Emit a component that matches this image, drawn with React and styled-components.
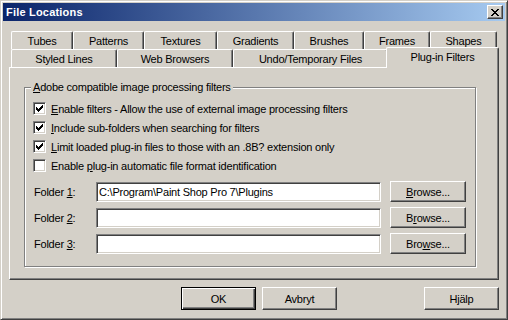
import React from "react";
import styled, { createGlobalStyle } from "styled-components";

const GlobalStyle = createGlobalStyle`
  html, body {
    margin: 0;
    padding: 0;
    background: #d4d0c8;
  }
  body {
    font-family: "Liberation Sans", Arial, sans-serif;
    font-size: 11px;
    letter-spacing: -0.22px;
    color: #000;
  }
`;

const Window = styled.div`
  width: 508px;
  height: 320px;
  box-sizing: border-box;
  background: #d4d0c8;
  border: 1px solid;
  border-color: #d4d0c8 #404040 #404040 #d4d0c8;
  box-shadow: inset 1px 1px #fff, inset -1px -1px #808080;
  padding: 2px;
  display: flex;
  flex-direction: column;
`;

const TitleBar = styled.div`
  height: 18px;
  flex: none;
  display: flex;
  align-items: center;
  justify-content: space-between;
  padding: 0 2px 0 3px;
  background: linear-gradient(to right, #0a246a, #a6caf0);
`;

const Title = styled.span`
  color: #fff;
  font-weight: bold;
  font-size: 11px;
  letter-spacing: 0.2px;
`;

const CloseButton = styled.div`
  width: 16px;
  height: 14px;
  box-sizing: border-box;
  background: #d4d0c8;
  border: 1px solid;
  border-color: #fff #404040 #404040 #fff;
  box-shadow: inset -1px -1px #808080;
  display: flex;
  align-items: center;
  justify-content: center;
`;

const Body = styled.div`
  flex: 1;
  display: flex;
  flex-direction: column;
  padding: 10px 6px 0 6px;
`;

const TabStrip = styled.div`
  padding-left: 2px;
`;

const TabRow = styled.div`
  display: flex;
  height: 18px;
`;

const Tab = styled.div`
  width: ${(p) => p.$w + (p.$active ? 4 : 0)}px;
  height: ${(p) => (p.$active ? 21 : 18)}px;
  margin: ${(p) => (p.$active ? "-2px -2px -1px -2px" : "0")};
  box-sizing: border-box;
  flex: none;
  position: relative;
  z-index: ${(p) => (p.$active ? 1 : 0)};
  background: #d4d0c8;
  border-left: 1px solid #fff;
  border-top: 1px solid #fff;
  border-right: 1px solid #404040;
  border-radius: 2px 2px 0 0;
  box-shadow: inset -1px 0 #808080;
  display: flex;
  align-items: center;
  justify-content: center;
  padding-bottom: ${(p) => (p.$active ? 3 : 0)}px;
  white-space: nowrap;
`;

const Panel = styled.div`
  height: 213px;
  box-sizing: border-box;
  border: 1px solid;
  border-color: #fff #404040 #404040 #fff;
  box-shadow: inset -1px -1px #808080;
  padding: 19px 22px 0 14px;
`;

const GroupBox = styled.div`
  position: relative;
  border: 1px solid #808080;
  box-shadow: inset 1px 1px #fff, 1px 1px #fff;
  padding: 11px 8px 12px 8px;
`;

const Legend = styled.span`
  position: absolute;
  top: -7px;
  left: 6px;
  padding: 0 2px;
  line-height: 13px;
  background: #d4d0c8;
  white-space: nowrap;
`;

const CheckRow = styled.div`
  display: flex;
  align-items: center;
  height: 19px;
  gap: 5px;
  white-space: nowrap;
`;

const CheckBox = styled.span`
  width: 13px;
  height: 13px;
  box-sizing: border-box;
  flex: none;
  background: #fff;
  border: 1px solid;
  border-color: #808080 #fff #fff #808080;
  box-shadow: inset 1px 1px #404040, inset -1px -1px #d4d0c8;
  display: flex;
  padding: 2px;
`;

const Key = styled.span`
  text-decoration: underline;
  text-underline-offset: 1px;
`;

const FolderRow = styled.div`
  display: flex;
  align-items: center;
  height: 21px;
  margin-top: ${(p) => (p.$first ? 6 : 5)}px;
`;

const FolderLabel = styled.span`
  width: 63px;
  flex: none;
  box-sizing: border-box;
  padding-left: 1px;
`;

const TextField = styled.input`
  width: 285px;
  height: 20px;
  flex: none;
  box-sizing: border-box;
  margin: 0;
  padding: 0 0 0 2px;
  background: #fff;
  border: 1px solid;
  border-color: #808080 #fff #fff #808080;
  box-shadow: inset 1px 1px #404040, inset -1px -1px #d4d0c8;
  font: inherit;
  letter-spacing: inherit;
  color: #000;
  outline: none;
`;

const Button = styled.button`
  width: ${(p) => p.$w || 75}px;
  height: ${(p) => p.$h || 23}px;
  flex: none;
  box-sizing: border-box;
  margin: 0;
  margin-left: ${(p) => p.$ml || "0"};
  padding: 0;
  background: #d4d0c8;
  font: inherit;
  letter-spacing: inherit;
  color: #000;
  border: 1px solid;
  border-color: ${(p) => (p.$default ? "#000" : "#fff #404040 #404040 #fff")};
  box-shadow: ${(p) =>
    p.$default
      ? "inset 1px 1px #fff, inset -1px -1px #404040, inset -2px -2px #808080"
      : "inset -1px -1px #808080"};
`;

const ButtonRow = styled.div`
  display: flex;
  margin-top: 7px;
  padding-left: 172px;
`;

const CloseGlyph = () => (
  <svg width="8" height="7" viewBox="0 0 8 7" shapeRendering="crispEdges">
    <path
      fill="#000"
      d="M0 0h2v1h-2z M6 0h2v1h-2z M1 1h2v1h-2z M5 1h2v1h-2z M2 2h4v1h-4z M3 3h2v1h-2z M2 4h4v1h-4z M1 5h2v1h-2z M5 5h2v1h-2z M0 6h2v1h-2z M6 6h2v1h-2z"
    />
  </svg>
);

const CheckGlyph = () => (
  <svg width="7" height="7" viewBox="0 0 7 7" shapeRendering="crispEdges">
    <path
      fill="#000"
      d="M0 2h1v3h-1z M1 3h1v3h-1z M2 4h1v3h-1z M3 3h1v3h-1z M4 2h1v3h-1z M5 1h1v3h-1z M6 0h1v3h-1z"
    />
  </svg>
);

const backTabs = [
  ["Tubes", 62],
  ["Patterns", 71],
  ["Textures", 73],
  ["Gradients", 77],
  ["Brushes", 70],
  ["Frames", 66],
  ["Shapes", 67],
];

const frontTabs = [
  ["Styled Lines", 106],
  ["Web Browsers", 116],
  ["Undo/Temporary Files", 155],
  ["Plug-in Filters", 109, true],
];

const options = [
  [true, "E", "nable filters - Allow the use of external image processing filters"],
  [true, "I", "nclude sub-folders when searching for filters"],
  [true, "L", "imit loaded plug-in files to those with an .8B? extension only"],
];

const folders = [
  ["1", "C:\\Program\\Paint Shop Pro 7\\Plugins", ["B", "rowse..."]],
  ["2", "", ["B", "r", "owse..."]],
  ["3", "", ["Bro", "w", "se..."]],
];

const renderBrowse = (parts) =>
  parts.length === 2 ? (
    <>
      <Key>{parts[0]}</Key>
      {parts[1]}
    </>
  ) : (
    <>
      {parts[0]}
      <Key>{parts[1]}</Key>
      {parts[2]}
    </>
  );

export default function App() {
  return (
    <>
      <GlobalStyle />
      <Window>
        <TitleBar>
          <Title>File Locations</Title>
          <CloseButton>
            <CloseGlyph />
          </CloseButton>
        </TitleBar>
        <Body>
          <TabStrip>
            <TabRow>
              {backTabs.map(([label, w]) => (
                <Tab key={label} $w={w}>
                  {label}
                </Tab>
              ))}
            </TabRow>
            <TabRow>
              {frontTabs.map(([label, w, active]) => (
                <Tab key={label} $w={w} $active={active}>
                  {label}
                </Tab>
              ))}
            </TabRow>
          </TabStrip>
          <Panel>
            <GroupBox>
              <Legend>
                <Key>A</Key>dobe compatible image processing filters
              </Legend>
              {options.map(([checked, key, rest]) => (
                <CheckRow key={key}>
                  <CheckBox>{checked && <CheckGlyph />}</CheckBox>
                  <span>
                    <Key>{key}</Key>
                    {rest}
                  </span>
                </CheckRow>
              ))}
              <CheckRow>
                <CheckBox />
                <span>
                  Enable <Key>p</Key>lug-in automatic file format identification
                </span>
              </CheckRow>
              {folders.map(([n, value, browse], i) => (
                <FolderRow key={n} $first={i === 0}>
                  <FolderLabel>
                    Folder <Key>{n}</Key>:
                  </FolderLabel>
                  <TextField readOnly defaultValue={value} />
                  <Button $w={76} $h={21} $ml="9px">
                    {renderBrowse(browse)}
                  </Button>
                </FolderRow>
              ))}
            </GroupBox>
          </Panel>
          <ButtonRow>
            <Button $default>OK</Button>
            <Button $ml="6px">Avbryt</Button>
            <Button $ml="auto">Hjälp</Button>
          </ButtonRow>
        </Body>
      </Window>
    </>
  );
}
